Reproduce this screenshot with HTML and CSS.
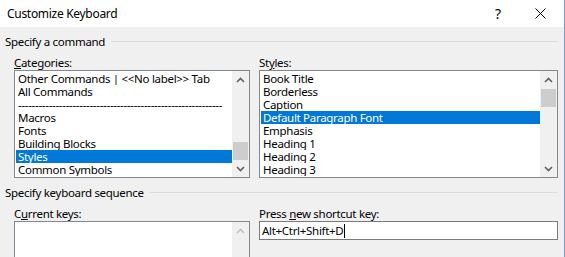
FILE: index.html
```html
<!DOCTYPE html>
<html>
<head>
<meta charset="utf-8">
<link rel="stylesheet" href="styles.css">
</head>
<body>
<div class="window">
  <div class="titlebar">
    <span class="title">Customize Keyboard</span>
    <span class="help">?</span>
    <span class="close"><svg width="11" height="11" viewBox="0 0 11 11"><path d="M0.5 0.5 L10.5 10.5 M10.5 0.5 L0.5 10.5" stroke="#000" stroke-width="1" fill="none"/></svg></span>
  </div>
  <div class="body">
    <div class="group-head"><span class="group-title">Specify a command</span><i class="rule"></i></div>
    <div class="cols">
      <div class="col col-left">
        <div class="label"><u>C</u>ategories:</div>
        <div class="listbox">
          <ul class="items">
            <li>Other Commands | &lt;&lt;No label&gt;&gt; Tab</li>
            <li>All Commands</li>
            <li>------------------------------------------------------------</li>
            <li>Macros</li>
            <li>Fonts</li>
            <li>Building Blocks</li>
            <li class="sel">Styles</li>
            <li>Common Symbols</li>
          </ul>
          <div class="scrollbar">
            <span class="arrow"><svg width="9" height="6" viewBox="0 0 9 6"><path d="M1 5 L4.5 1.5 L8 5" stroke="#606060" stroke-width="1.6" fill="none"/></svg></span>
            <span class="track"><span class="thumb thumb-left"></span></span>
            <span class="arrow"><svg width="9" height="6" viewBox="0 0 9 6"><path d="M1 1 L4.5 4.5 L8 1" stroke="#606060" stroke-width="1.6" fill="none"/></svg></span>
          </div>
        </div>
      </div>
      <div class="col col-right">
        <div class="label">St<u>y</u>les:</div>
        <div class="listbox">
          <ul class="items">
            <li>Book Title</li>
            <li>Borderless</li>
            <li>Caption</li>
            <li class="sel">Default Paragraph Font</li>
            <li>Emphasis</li>
            <li>Heading 1</li>
            <li>Heading 2</li>
            <li>Heading 3</li>
          </ul>
          <div class="scrollbar">
            <span class="arrow"><svg width="9" height="6" viewBox="0 0 9 6"><path d="M1 5 L4.5 1.5 L8 5" stroke="#606060" stroke-width="1.6" fill="none"/></svg></span>
            <span class="track"><span class="thumb thumb-right"></span></span>
            <span class="arrow"><svg width="9" height="6" viewBox="0 0 9 6"><path d="M1 1 L4.5 4.5 L8 1" stroke="#606060" stroke-width="1.6" fill="none"/></svg></span>
          </div>
        </div>
      </div>
    </div>
    <div class="group-head group-head-2"><span class="group-title">Specify keyboard sequence</span><i class="rule"></i></div>
    <div class="cols">
      <div class="col col-left">
        <div class="label">C<u>u</u>rrent keys:</div>
        <div class="listbox keys">
          <ul class="items"></ul>
          <div class="scrollbar">
            <span class="arrow"><svg width="9" height="6" viewBox="0 0 9 6"><path d="M1 5 L4.5 1.5 L8 5" stroke="#c2c2c2" stroke-width="1.6" fill="none"/></svg></span>
          </div>
        </div>
      </div>
      <div class="col col-right">
        <div class="label">Press <u>n</u>ew shortcut key:</div>
        <div class="textbox">Alt+Ctrl+Shift+D<span class="caret"></span></div>
      </div>
    </div>
  </div>
</div>
</body>
</html>
```
FILE: styles.css
```css
* { box-sizing: border-box; }
html, body {
  margin: 0;
  padding: 0;
  width: 565px;
  height: 257px;
  overflow: hidden;
  background: #ffffff;
  font-family: "Segoe UI", "Noto Sans", sans-serif;
  font-size: 11.5px;
  letter-spacing: -0.3px;
  color: #000;
}
.window {
  width: 565px;
  height: 257px;
  border-right: 1px solid #6fa2dc;
  background: #f0f0f0;
  display: flex;
  flex-direction: column;
}
.titlebar {
  height: 27px;
  background: #ffffff;
  display: flex;
  align-items: center;
}
.title {
  font-size: 12px;
  letter-spacing: -0.3px;
  padding-left: 7px;
  flex: 1;
}
.help {
  font-size: 14px;
  letter-spacing: 0;
  width: 20px;
  text-align: center;
  margin-right: 27px;
}
.close {
  width: 11px;
  height: 11px;
  margin-right: 18px;
  display: flex;
}
.body {
  flex: 1;
  padding: 7px 6px 0 5px;
  overflow: hidden;
}
.group-head {
  display: flex;
  align-items: center;
  height: 15px;
  line-height: 15px;
}
.group-head-2 { margin-top: 7px; }
.rule {
  flex: 1;
  height: 1px;
  background: #dcdcdc;
  margin-left: 6px;
  margin-top: -1px;
}
.cols {
  display: flex;
  margin-top: 6px;
  padding-left: 9px;
  gap: 9px;
}
.col { display: flex; flex-direction: column; }
.col-left { width: 236px; }
.col-right { width: 299px; }
.label {
  height: 15px;
  line-height: 15px;
}
.listbox {
  height: 108px;
  border: 1px solid #828790;
  background: #fff;
  display: flex;
}
.items {
  list-style: none;
  margin: 0;
  padding: 1px 0 0 1px;
  flex: 1;
  overflow: hidden;
}
.items li {
  height: 13px;
  line-height: 13px;
  padding-left: 2px;
  white-space: nowrap;
  overflow: hidden;
}
.items li.sel {
  background: #0078d7;
  color: #fff;
}
.scrollbar {
  width: 17px;
  background: #f0f0f0;
  display: flex;
  flex-direction: column;
}
.arrow {
  height: 17px;
  display: flex;
  align-items: center;
  justify-content: center;
}
.track {
  flex: 1;
  display: flex;
  flex-direction: column;
}
.thumb {
  display: block;
  height: 18px;
  margin: 0 1px;
  background: #cdcdcd;
}
.thumb-left { margin-top: 54px; }
.thumb-right { margin-top: 1px; }
.keys { height: 60px; }
.textbox {
  height: 19px;
  border: 1px solid #7a7a7a;
  background: #fff;
  line-height: 17px;
  padding-left: 2px;
  display: flex;
  align-items: center;
}
.caret {
  width: 1px;
  height: 14px;
  background: #000;
  margin-left: 1px;
}
```
